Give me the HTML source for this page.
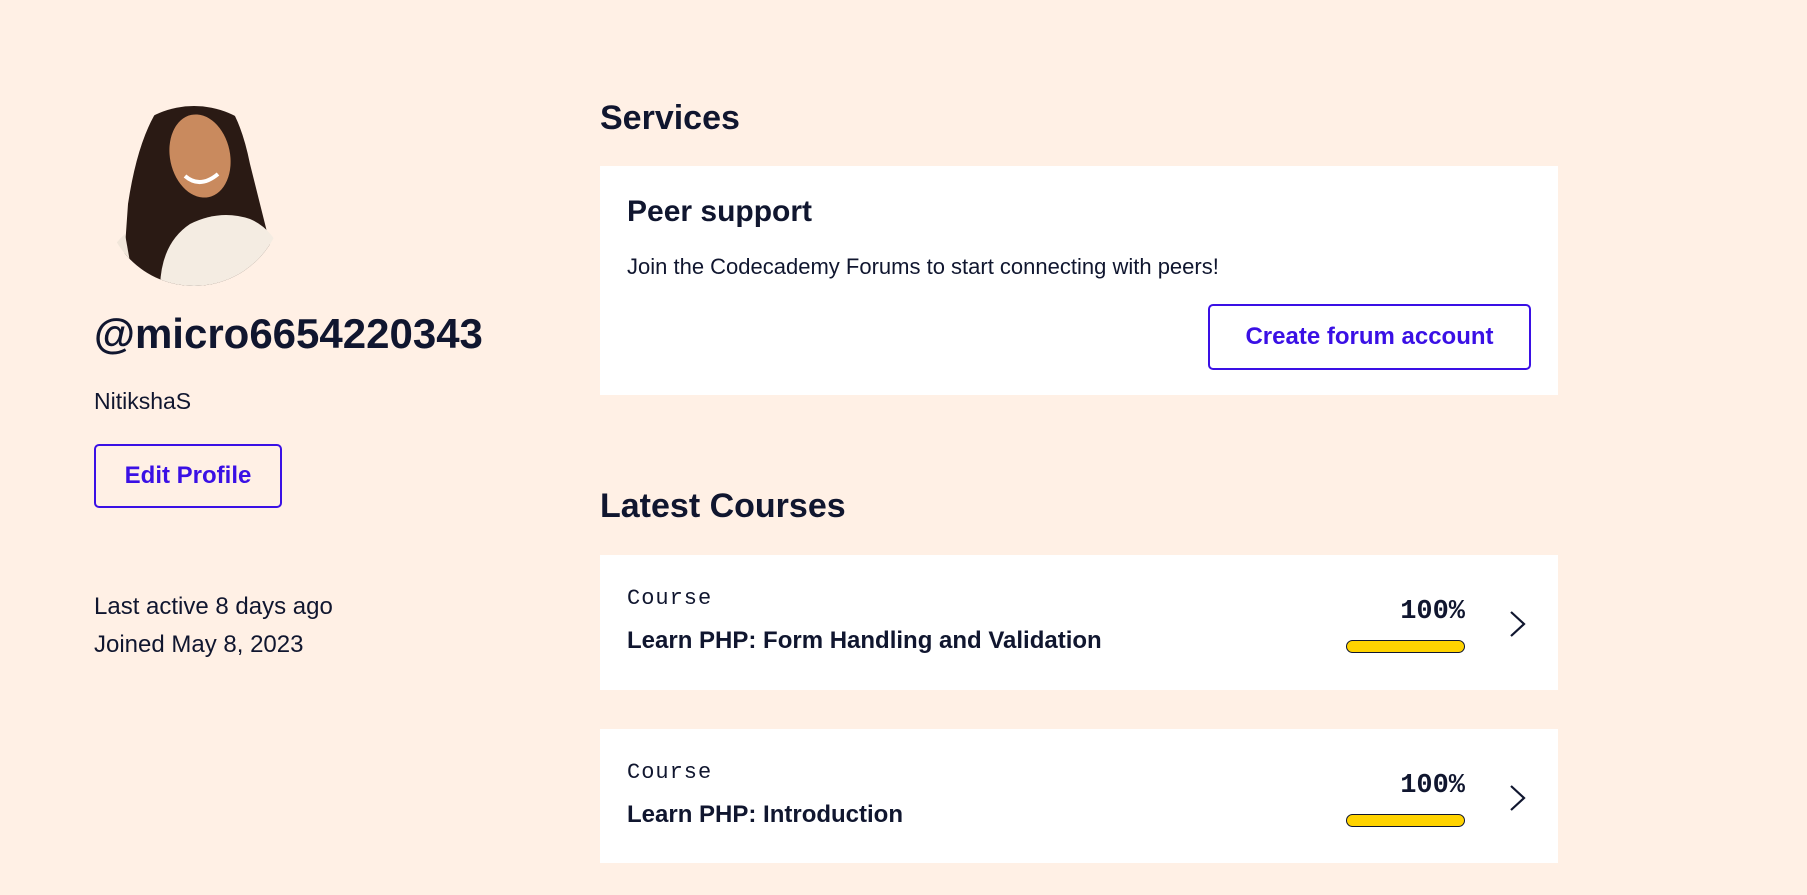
<!DOCTYPE html>
<html><head><meta charset="utf-8"><style>
*{margin:0;padding:0;box-sizing:border-box}
body{width:1807px;height:895px;background:#fff0e5;font-family:"Liberation Sans",sans-serif;color:#10162f;position:relative;overflow:hidden}
.a{position:absolute;white-space:nowrap}
.card{position:absolute;background:#fff;left:600px;width:958px}
.btn{position:absolute;border:2px solid #3a10e5;border-radius:5px;color:#3a10e5;font-weight:bold;font-size:24px;display:flex;align-items:center;justify-content:center}
.mono{font-family:"Liberation Mono",monospace}
.bar{position:absolute;left:746px;width:119px;height:13px;background:#ffd300;border:1px solid #10162f;border-radius:7px}
</style></head><body>
<svg class="a" style="left:100px;top:84px" width="190" height="206" viewBox="0 0 190 206">
<defs><clipPath id="c"><circle cx="94" cy="112" r="90"/></clipPath></defs>
<g clip-path="url(#c)">
<rect x="0" y="0" width="190" height="206" fill="#fff0e5"/>
<path d="M22 206 L28 120 Q40 40 70 10 Q95 -2 120 10 Q140 30 150 80 Q160 120 170 160 L175 206Z" fill="#2a1a14"/>
<path d="M60 206 Q60 160 90 140 Q120 125 150 135 Q185 150 190 206Z" fill="#f4ece2"/>
<path d="M0 206 Q2 170 25 150 L35 206Z" fill="#f1e6da"/>
<ellipse cx="100" cy="72" rx="30" ry="42" fill="#c98a5e" transform="rotate(-12 100 72)"/>
<path d="M85 92 Q100 105 118 90" fill="none" stroke="#fff" stroke-width="4"/>
</g></svg>
<div class="a" style="left:94px;top:310px;font-size:42px;font-weight:bold">@micro6654220343</div>
<div class="a" style="left:94px;top:388px;font-size:23px">NitikshaS</div>
<div class="btn" style="left:94px;top:444px;width:188px;height:64px">Edit Profile</div>
<div class="a" style="left:94px;top:593px;font-size:24px">Last active 8 days ago</div>
<div class="a" style="left:94px;top:631px;font-size:24px">Joined May 8, 2023</div>

<div class="a" style="left:600px;top:99px;font-size:34px;font-weight:bold">Services</div>
<div class="card" style="top:166px;height:229px">
<div class="a" style="left:27px;top:29px;font-size:30px;font-weight:bold">Peer support</div>
<div class="a" style="left:27px;top:88px;font-size:22px">Join the Codecademy Forums to start connecting with peers!</div>
<div class="btn" style="left:608px;top:138px;width:323px;height:66px">Create forum account</div>
</div>

<div class="a" style="left:600px;top:487px;font-size:34px;font-weight:bold">Latest Courses</div>
<div class="card" style="top:555px;height:135px">
<div class="a mono" style="left:27px;top:31px;font-size:22px;letter-spacing:1px">Course</div>
<div class="a" style="left:27px;top:72px;font-size:24px;font-weight:bold">Learn PHP: Form Handling and Validation</div>
<div class="a mono" style="right:93px;top:42px;font-size:27px;font-weight:bold">100%</div>
<div class="bar" style="top:85px"></div>
<svg class="a" style="left:908px;top:54px" width="20" height="30" viewBox="0 0 20 30"><path d="M3 3 L16 15 L3 27" fill="none" stroke="#10162f" stroke-width="2.2"/></svg>
</div>
<div class="card" style="top:729px;height:134px">
<div class="a mono" style="left:27px;top:31px;font-size:22px;letter-spacing:1px">Course</div>
<div class="a" style="left:27px;top:72px;font-size:24px;font-weight:bold">Learn PHP: Introduction</div>
<div class="a mono" style="right:93px;top:42px;font-size:27px;font-weight:bold">100%</div>
<div class="bar" style="top:85px"></div>
<svg class="a" style="left:908px;top:54px" width="20" height="30" viewBox="0 0 20 30"><path d="M3 3 L16 15 L3 27" fill="none" stroke="#10162f" stroke-width="2.2"/></svg>
</div>
</body></html>
